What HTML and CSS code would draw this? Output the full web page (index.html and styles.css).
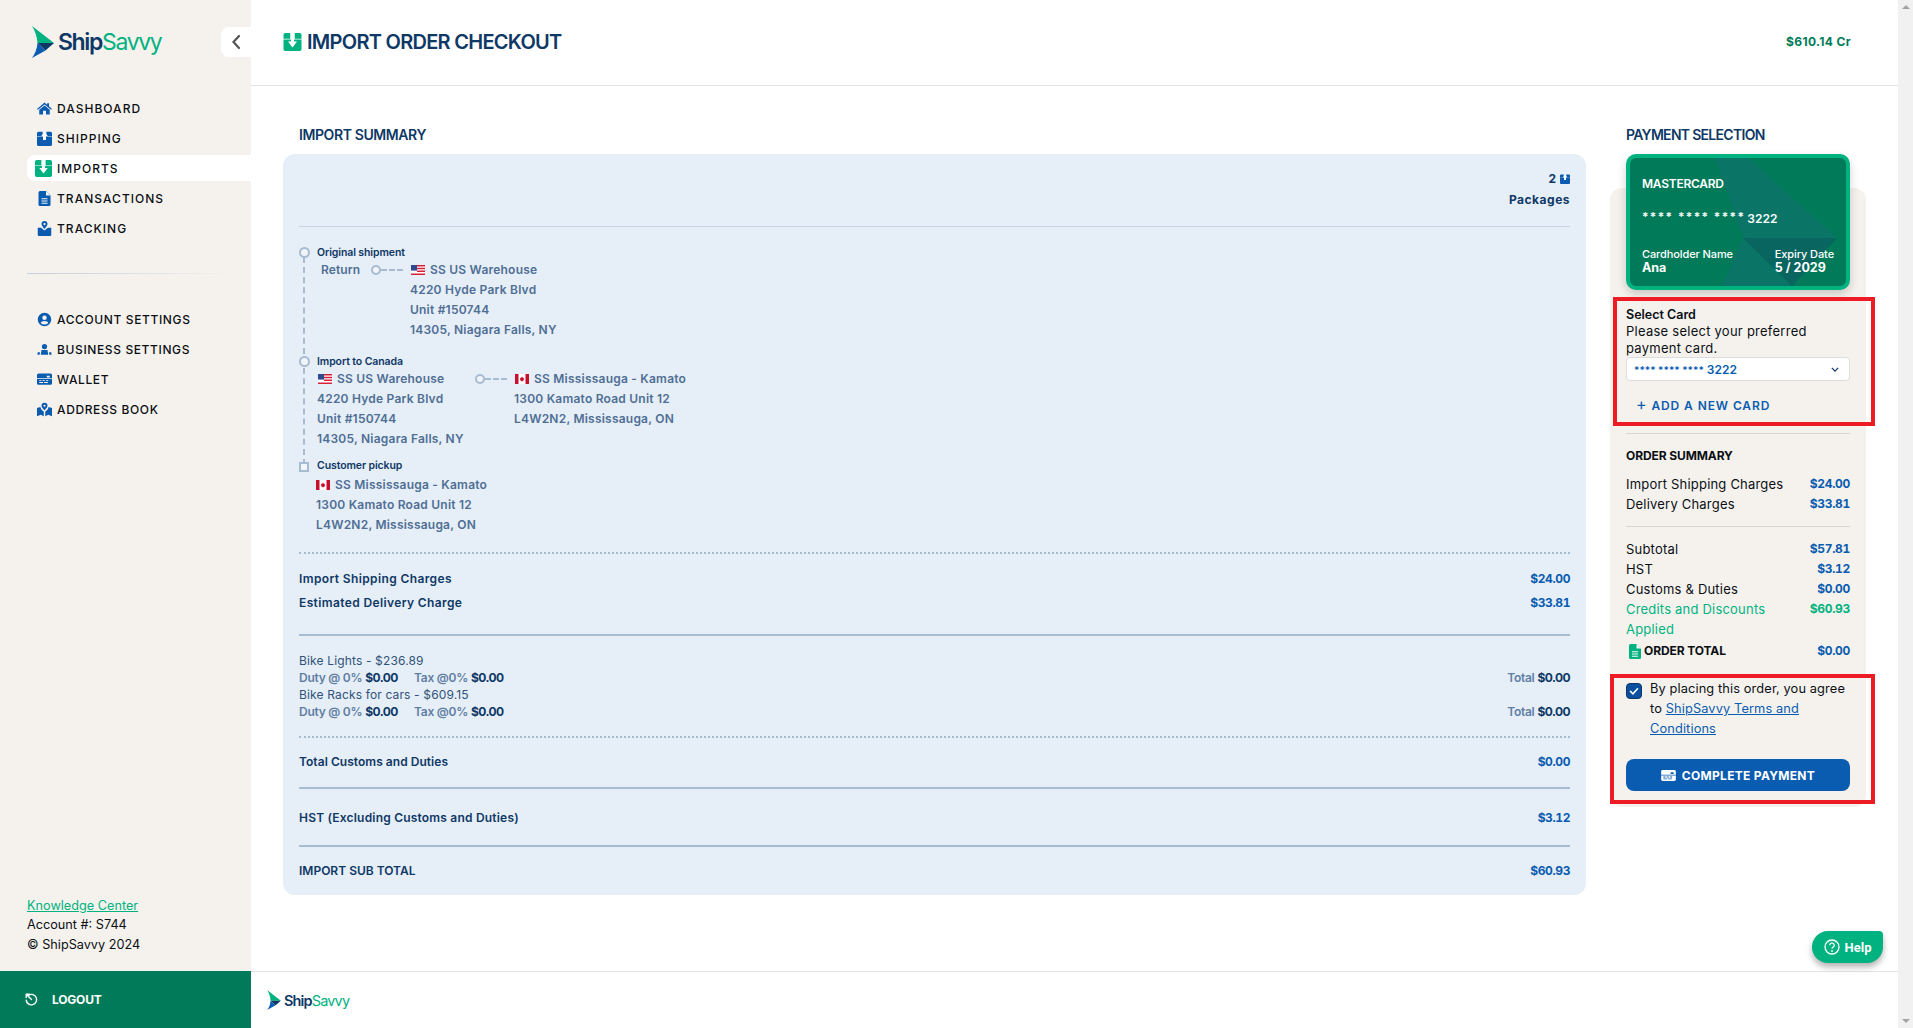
FILE: index.html
```html
<!DOCTYPE html>
<html lang="en">
<head>
<meta charset="utf-8">
<title>Import Order Checkout - ShipSavvy</title>
<link rel="stylesheet" href="styles.css">
</head>
<body>
<svg class="defs" width="0" height="0" aria-hidden="true">
  <symbol id="i-import" viewBox="0 0 20 20"><path fill="#00b27f" d="M2 0h5.500v6.500H0V2a2 2 0 0 1 2-2zM12.500 0H18a2 2 0 0 1 2 2v4.500h-7.500zM0 7.200h20V18a2 2 0 0 1-2 2H2a2 2 0 0 1-2-2z"/><path fill="#fff" d="M8.200 3h3.600v6.500H15L10 16 5 9.500h3.200z"/></symbol>
  <symbol id="i-box" viewBox="0 0 20 20"><path fill="#0a5cb0" d="M2 1h5.500v5.500H0V3a2 2 0 0 1 2-2zM12.500 1H18a2 2 0 0 1 2 2v3.500h-7.500zM0 7.200h20V18a2 2 0 0 1-2 2H2a2 2 0 0 1-2-2z"/><path fill="#fff" d="M10 1.500l4.500 5H12V12H8V6.500H5.500z"/></symbol>
  <symbol id="i-doc" viewBox="0 0 16 20"><path d="M2 0h8l6 6v12a2 2 0 0 1-2 2H2a2 2 0 0 1-2-2V2a2 2 0 0 1 2-2z"/><path fill="#fff" d="M10 0v6h6zM4 9.500h8V11H4zM4 12.500h8V14H4zM4 15.500h8V17H4z" opacity=".95"/></symbol>
  <symbol id="i-flag-us" viewBox="0 0 14 10"><path fill="#fff" d="M0 0h14v10H0z"/><path fill="#d8203a" d="M0 0h14v1.400H0zM6 2.800h8v1.400H6zM6 5.600h8V7H6zM0 8.400h14V10H0z"/><path fill="#2f4a8f" d="M0 0h6v5.600H0z"/></symbol>
  <symbol id="i-flag-ca" viewBox="0 0 14 10"><path fill="#fff" d="M0 0h14v10H0z"/><path fill="#c8102e" d="M0 0h3.500v10H0zM10.500 0H14v10h-3.500zM7 2.500l1 1.500 1-.3-.4 1.800.8.2L7 7.500 4.600 5.700l.8-.2L5 3.700l1 .3z"/></symbol>
  <symbol id="i-card" viewBox="0 0 20 15"><path d="M2 0h16a2 2 0 0 1 2 2v11a2 2 0 0 1-2 2H2a2 2 0 0 1-2-2V2a2 2 0 0 1 2-2z"/><path fill="var(--cut)" d="M13 3h4v2.500h-4zM0 6.500h20V7.500H0zM3 9h3v1.200H3zM7.500 9h3v1.200h-3zM12 9h3v1.200h-3zM3 11.500h5v1.200H3zM9.500 11.500h5v1.200h-5z"/></symbol>
  <symbol id="i-mark" viewBox="0 0 22 32"><path fill="#00b27f" d="M0 0l22 17H5.500C5 10 3 5 0 0z"/><path fill="#0e3866" d="M5.500 17H22l-8.500 7.500z"/><path fill="#0a5cb0" d="M5.500 17l8 7.500L0 32c3-4 5-9 5.500-15z"/></symbol>
</svg>

<div class="app">
  <aside class="sidebar">
    <div class="brand">
      <a class="logo" href="#"><svg class="logo-mark"><use href="#i-mark"/></svg><span class="logo-text">Ship<span class="savvy">Savvy</span></span></a>
      <button class="collapse" type="button" aria-label="Collapse"><svg viewBox="0 0 10 16" class="chev"><path d="M8 2L2.500 8 8 14" fill="none" stroke="#555" stroke-width="2.200" stroke-linecap="round"/></svg></button>
    </div>
    <nav class="nav">
      <a class="nav-item" href="#"><svg class="nav-icon" viewBox="0 0 20 20"><path fill="#0a5cb0" d="M10 2L0 10.500l1.200 1.300L10 4.500l8.800 7.300 1.200-1.300L16 7V3h-2.500v1.900z"/><path fill="#0a5cb0" d="M10 6l-7 5.800V18h5v-5h4v5h5v-6.200z"/></svg>DASHBOARD</a>
      <a class="nav-item" href="#"><svg class="nav-icon"><use href="#i-box"/></svg>SHIPPING</a>
      <a class="nav-item active" href="#"><svg class="nav-icon big"><use href="#i-import"/></svg>IMPORTS</a>
      <a class="nav-item" href="#"><svg class="nav-icon doc"><use href="#i-doc"/></svg>TRANSACTIONS</a>
      <a class="nav-item" href="#"><svg class="nav-icon" viewBox="0 0 20 20"><path fill="#0a5cb0" fill-rule="evenodd" d="M10 0a4 4 0 0 1 4 4c0 2.500-4 6.500-4 6.500S6 6.500 6 4a4 4 0 0 1 4-4zm0 2.500a1.500 1.500 0 1 0 0 3 1.500 1.500 0 0 0 0-3z"/><path fill="#0a5cb0" d="M1 9h4.500l4.500 3.500L14.500 9H19v9.500a1.500 1.500 0 0 1-1.500 1.500h-15A1.500 1.500 0 0 1 1 18.500z"/></svg>TRACKING</a>
    </nav>
    <div class="nav-rule"></div>
    <nav class="nav nav-alt">
      <a class="nav-item" href="#"><svg class="nav-icon" viewBox="0 0 20 20"><path fill="#0a5cb0" fill-rule="evenodd" d="M10 1a9 9 0 1 1 0 18 9 9 0 0 1 0-18zm0 3.500a3 3 0 1 0 0 6 3 3 0 0 0 0-6zm0 7.500c-2.500 0-4.500 1-5 2.500a6.800 6.800 0 0 0 10 0c-.5-1.500-2.500-2.500-5-2.500z"/></svg>ACCOUNT SETTINGS</a>
      <a class="nav-item" href="#"><svg class="nav-icon" viewBox="0 0 20 20"><circle cx="10" cy="6" r="3.500" fill="#0a5cb0"/><path fill="#0a5cb0" d="M6 10.500h8l1 6.500H5zM1 13.500h3L3.500 17H0.500zM16 13.500h3l.5 3.500h-3z"/></svg>BUSINESS SETTINGS</a>
      <a class="nav-item" href="#"><svg class="nav-icon wallet"><use href="#i-card"/></svg>WALLET</a>
      <a class="nav-item" href="#"><svg class="nav-icon" viewBox="0 0 20 20"><path fill="#0a5cb0" fill-rule="evenodd" d="M10 1a4 4 0 0 1 4 4c0 2.500-4 6-4 6S6 7.500 6 5a4 4 0 0 1 4-4zm0 2.600a1.400 1.400 0 1 0 0 2.800 1.400 1.400 0 0 0 0-2.800z"/><path fill="#0a5cb0" d="M0 8l4.500-1.500 1 3L9 13v6l-4-2-5 2zM11 13l3.500-3.500 1-3L20 8v11l-5-2-4 2z"/></svg>ADDRESS BOOK</a>
    </nav>
    <div class="side-foot">
      <a class="kc" href="#">Knowledge Center</a>
      <div>Account #: S744</div>
      <div>© ShipSavvy 2024</div>
    </div>
    <a class="logout" href="#"><svg class="logout-icon" viewBox="0 0 16 16"><path fill="none" stroke="#fff" stroke-width="1.700" stroke-linecap="round" d="M4.500 2.700a6.400 6.400 0 1 1-3 6M1.500 1.500L8 8M1.500 1.500v4M1.500 1.500h4"/></svg>LOGOUT</a>
  </aside>

  <div class="main">
    <header class="topbar">
      <h1 class="title"><svg class="title-icon"><use href="#i-import"/></svg>IMPORT ORDER CHECKOUT</h1>
      <span class="credit">$610.14 Cr</span>
    </header>

    <div class="content">
      <section class="summary">
        <h2 class="sec-title inset">IMPORT SUMMARY</h2>
        <div class="panel">
          <div class="pkgs">
            <div class="pkg-count">2 <svg class="pkg-icon"><use href="#i-box"/></svg></div>
            <div class="pkg-label">Packages</div>
          </div>

          <div class="timeline">
            <span class="rail"></span>
            <div class="leg">
              <span class="node"></span>
              <div class="leg-title">Original shipment</div>
              <div class="route">
                <div class="return">Return</div>
                <div class="conn"><span class="conn-dot"></span><span class="conn-dash"></span></div>
                <div class="stop">
                  <div class="line line-first"><svg class="flag"><use href="#i-flag-us"/></svg>SS US Warehouse</div>
                  <div class="line">4220 Hyde Park Blvd</div>
                  <div class="line">Unit #150744</div>
                  <div class="line">14305, Niagara Falls, NY</div>
                </div>
              </div>
            </div>
            <div class="leg leg-two">
              <span class="node"></span>
              <div class="leg-title">Import to Canada</div>
              <div class="route">
                <div class="stop stop-us">
                  <div class="line line-first"><svg class="flag"><use href="#i-flag-us"/></svg>SS US Warehouse</div>
                  <div class="line">4220 Hyde Park Blvd</div>
                  <div class="line">Unit #150744</div>
                  <div class="line">14305, Niagara Falls, NY</div>
                </div>
                <div class="conn"><span class="conn-dot"></span><span class="conn-dash"></span></div>
                <div class="stop">
                  <div class="line line-first"><svg class="flag"><use href="#i-flag-ca"/></svg>SS Mississauga - Kamato</div>
                  <div class="line">1300 Kamato Road Unit 12</div>
                  <div class="line">L4W2N2, Mississauga, ON</div>
                </div>
              </div>
            </div>
            <div class="leg leg-three">
              <span class="node square"></span>
              <div class="leg-title">Customer pickup</div>
              <div class="stop stop-last">
                <div class="line"><svg class="flag"><use href="#i-flag-ca"/></svg>SS Mississauga - Kamato</div>
                <div class="line">1300 Kamato Road Unit 12</div>
                <div class="line">L4W2N2, Mississauga, ON</div>
              </div>
            </div>
          </div>

          <div class="charges dotted">
            <div class="row"><span>Import Shipping Charges</span><b>$24.00</b></div>
            <div class="row"><span>Estimated Delivery Charge</span><b>$33.81</b></div>
          </div>

          <div class="items solid">
            <div class="item-name">Bike Lights - $236.89</div>
            <div class="item-tax"><span class="tx"><span class="muted">Duty @ 0%</span> <b>$0.00</b></span><span class="tx"><span class="muted">Tax @0%</span> <b>$0.00</b></span><span class="tx-total"><span class="muted">Total</span> <b>$0.00</b></span></div>
            <div class="item-name">Bike Racks for cars - $609.15</div>
            <div class="item-tax"><span class="tx"><span class="muted">Duty @ 0%</span> <b>$0.00</b></span><span class="tx"><span class="muted">Tax @0%</span> <b>$0.00</b></span><span class="tx-total"><span class="muted">Total</span> <b>$0.00</b></span></div>
          </div>

          <div class="block dotted pad-a"><div class="row"><span>Total Customs and Duties</span><b>$0.00</b></div></div>
          <div class="block solid pad-b"><div class="row"><span>HST (Excluding Customs and Duties)</span><b>$3.12</b></div></div>
          <div class="block solid pad-c"><div class="row"><span>IMPORT SUB TOTAL</span><b>$60.93</b></div></div>
        </div>
      </section>

      <section class="payment">
        <h2 class="sec-title">PAYMENT SELECTION</h2>
        <div class="card">
          <svg class="card-art" viewBox="0 0 216 128" preserveAspectRatio="none"><path fill="#0a7566" d="M85 0h33l89 80H113zM113 80l49 48H92z"/><path fill="#09655f" d="M113 80h94l-45 48z"/></svg>
          <div class="card-brand">MASTERCARD</div>
          <div class="card-num"><span class="card-dots">**** **** ****</span> 3222</div>
          <div class="card-foot">
            <div><div class="card-cap">Cardholder Name</div><div class="card-val">Ana</div></div>
            <div><div class="card-cap">Expiry Date</div><div class="card-val">5 / 2029</div></div>
          </div>
        </div>
        <div class="pay-panel">
          <div class="sel-title">Select Card</div>
          <div class="sel-help">Please select your preferred payment card.</div>
          <div class="select"><span><span class="sel-dots">**** **** ****</span> 3222</span><svg class="sel-chev" viewBox="0 0 10 6"><path d="M1 1l4 4 4-4" fill="none" stroke="#0e3866" stroke-width="1.500"/></svg></div>
          <a class="add-card" href="#"><span class="plus">+</span> ADD A NEW CARD</a>
          <div class="order">
            <h3 class="order-title">ORDER SUMMARY</h3>
            <div class="o-row"><span>Import Shipping Charges</span><b>$24.00</b></div>
            <div class="o-row"><span>Delivery Charges</span><b>$33.81</b></div>
            <div class="o-rule"></div>
            <div class="o-row"><span>Subtotal</span><b>$57.81</b></div>
            <div class="o-row"><span>HST</span><b>$3.12</b></div>
            <div class="o-row"><span>Customs &amp; Duties</span><b>$0.00</b></div>
            <div class="o-row credit-row"><span>Credits and Discounts Applied</span><b>$60.93</b></div>
            <div class="o-row total-row"><span class="total-label"><svg class="total-icon"><use href="#i-doc"/></svg>ORDER TOTAL</span><b>$0.00</b></div>
          </div>
          <label class="agree">
            <span class="check"><svg viewBox="0 0 16 16"><path d="M4 8.500l2.800 2.700L12 5.500" fill="none" stroke="#fff" stroke-width="1.800" stroke-linecap="round"/></svg></span>
            <span class="agree-text">By placing this order, you agree to <a href="#">ShipSavvy Terms and Conditions</a></span>
          </label>
          <button class="pay-btn" type="button"><svg class="pay-icon"><use href="#i-card"/></svg>COMPLETE PAYMENT</button>
        </div>
        <div class="mark mark-a"></div>
        <div class="mark mark-b"></div>
      </section>
    </div>

    <footer class="foot">
      <svg class="foot-mark"><use href="#i-mark"/></svg><span class="foot-text">Ship<span class="savvy">Savvy</span></span>
    </footer>

    <button class="help" type="button"><svg class="help-icon" viewBox="0 0 16 16"><circle cx="8" cy="8" r="7" fill="none" stroke="#fff" stroke-width="1.300"/><path d="M5.800 6.200a2.200 2.200 0 1 1 3.400 1.800c-.8.500-1.200 1-1.200 1.800" fill="none" stroke="#fff" stroke-width="1.300"/><circle cx="8" cy="12" r=".9" fill="#fff"/></svg>Help</button>
  </div>

  <div class="scrollbar"><span class="arrow up"></span><span class="arrow down"></span></div>
</div>
</body>
</html>
```

FILE: styles.css
```css
* { box-sizing: border-box; }
html, body { margin: 0; height: 100%; overflow: hidden; }
body { font-family: Inter, "Liberation Sans", sans-serif; font-size: 12px; color: #0b0f14; background: #fff; }
a { color: inherit; text-decoration: none; }
h1, h2, h3 { margin: 0; }
button { font-family: inherit; border: 0; cursor: pointer; }
.defs { position: absolute; }

.app { display: flex; height: 1028px; width: 1913px; }

/* sidebar */
.sidebar { width: 251px; flex: none; background: #f5f2ee; display: flex; flex-direction: column; }
.brand { height: 93px; padding-top: 26px; display: flex; justify-content: space-between; align-items: flex-start; padding-left: 32px; flex: none; }
.logo { display: flex; align-items: center; height: 32px; }
.logo-mark { width: 22px; height: 32px; }
.logo-text { font-size: 23px; font-weight: 600; color: #0e3866; margin-left: 4px; letter-spacing: -1.35px; }
.savvy { color: #00b27f; font-weight: 400; }
.collapse { width: 30px; height: 30px; margin-top: 1px; background: #fff; border-radius: 8px 0 0 8px; padding: 0; display: flex; align-items: center; justify-content: center; }
.chev { width: 10px; height: 16px; }

.nav { display: flex; flex-direction: column; padding-left: 27px; }
.nav-item { height: 30px; display: flex; align-items: center; gap: 5px; padding-left: 10px; letter-spacing: 1.02px; font-size: 12px; font-weight: 500; color: #0b0f14; }
.nav-alt .nav-item { letter-spacing: .62px; }
.nav-item.active { height: 26px; margin: 2px 0; background: #fff; border-radius: 8px 0 0 8px; padding-left: 8px; gap: 5px; }
.nav-icon { width: 15px; height: 15px; flex: none; }
.nav-icon.big { width: 17px; height: 17px; }
.nav-icon.doc { fill: #0a5cb0; }
.nav-icon.wallet { fill: #0a5cb0; --cut: #f5f2ee; height: 12px; }
.nav-rule { height: 1px; margin: 30px 11px 30px 27px; background: linear-gradient(90deg, #c3cfdc, #f5f2ee); }

.side-foot { margin-top: auto; padding: 0 0 17px 27px; line-height: 19.500px; font-size: 12.700px; }
.kc { color: #00b27f; text-decoration: underline; display: block; }
.logout { height: 57px; flex: none; background: #007a58; color: #fff; display: flex; align-items: center; padding-left: 25px; gap: 14px; font-weight: 700; font-size: 12px; letter-spacing: -.2px; }
.logout-icon { width: 13px; height: 13px; }

/* main */
.main { flex: 1; min-width: 0; display: flex; flex-direction: column; position: relative; }
.topbar { height: 86px; flex: none; border-bottom: 1px solid #e3e3e3; display: flex; justify-content: space-between; align-items: center; padding: 0 47px 2px 32px; }
.title { display: flex; align-items: center; gap: 5px; font-size: 20px; font-weight: 600; color: #0e3866; letter-spacing: -.72px; }
.title-icon { width: 19px; height: 18px; }
.credit { color: #007a58; font-weight: 700; font-size: 12px; letter-spacing: .35px; }

.content { flex: 1; display: flex; gap: 24px; padding: 39px 32px 0; min-height: 0; }
.summary { width: 1303px; flex: none; }
.sec-title { font-size: 14px; line-height: 20px; font-weight: 600; color: #0e3866; margin-bottom: 9px; letter-spacing: -.4px; }
.payment .sec-title { letter-spacing: -.7px; }
.sec-title.inset { padding-left: 16px; }
.panel { background: #e6eef7; border-radius: 12px; padding: 0 16px; height: 741px; color: #0e3866; }

.pkgs { padding: 15px 0 16px; border-bottom: 1px solid #c4d4e6; text-align: right; font-weight: 700; height: 73px; }
.pkg-count { line-height: 20px; display: flex; justify-content: flex-end; align-items: center; gap: 4px; margin-bottom: 1px; }
.pkg-icon { width: 10px; height: 10px; }
.pkg-label { line-height: 20px; letter-spacing: .5px; }

.timeline { position: relative; padding: 19px 0 0 18px; height: 325px; }
.rail { position: absolute; left: 3.500px; top: 30px; height: 208px; border-left: 2px dashed #a7bbd1; }
.leg { position: relative; }
.leg-two { margin-top: 15px; }
.leg-three { margin-top: 10px; }
.node { position: absolute; left: -18.500px; top: 1px; width: 11px; height: 11px; border: 2.500px solid #a7bbd1; border-radius: 50%; background: #f1f5fa; }
.node.square { border-radius: 0; top: 3px; width: 10px; height: 10px; left: -18px; border-width: 2px; }
.leg-title { line-height: 14px; font-size: 10.500px; font-weight: 600; color: #0e3866; letter-spacing: -.1px; }
.route { display: flex; align-items: flex-start; }
.return { width: 50px; margin-left: 4px; line-height: 20px; font-weight: 600; color: #4f6f95; letter-spacing: .1px; }
.stop { font-weight: 600; color: #4f6f95; letter-spacing: .22px; }
.stop-us { width: 158px; }
.stop-last { margin-left: -1px; }
.leg-three .leg-title { margin-bottom: 2px; }
.line { line-height: 20px; white-space: nowrap; display: flex; align-items: center; }
.line-first { padding-left: 1px; }
.flag { width: 14px; height: 10px; margin-right: 5px; flex: none; }
.conn { width: 32px; margin-right: 7px; height: 20px; display: flex; align-items: center; flex: none; }
.conn-dot { width: 10px; height: 10px; border: 2px solid #a7bbd1; border-radius: 50%; background: #f1f5fa; flex: none; }
.conn-dash { flex: 1; border-top: 2px dashed #a7bbd1; }

.dotted { border-top: 2px dotted #a7bbd1; }
.solid { border-top: 2px solid #a7bbd1; }
.row { display: flex; justify-content: space-between; line-height: 20px; font-weight: 600; color: #0e3866; }
.row b { color: #0a5cb0; font-weight: 700; letter-spacing: -.4px; font-variant-numeric: tabular-nums; }
.charges .row span { letter-spacing: .38px; }
.pad-a .row span { letter-spacing: .04px; }
.pad-b .row span { letter-spacing: .2px; }
.charges { padding: 15px 0 21px; display: flex; flex-direction: column; gap: 4px; height: 82px; }
.items { padding: 15.500px 0 16px; height: 102px; line-height: 17px; }
.item-name { color: #2f5379; letter-spacing: .15px; }
.item-tax { display: flex; font-weight: 600; }
.item-tax b { color: #0e3866; font-weight: 700; letter-spacing: -.6px; }
.muted { color: #5f7ea3; letter-spacing: -.25px; }
.tx { width: 115px; }
.tx + .tx { width: auto; }
.tx-total { margin-left: auto; }
.block { display: block; }
.pad-a { padding-top: 14px; height: 51px; }
.pad-b { padding-top: 19px; height: 58px; }
.pad-c { padding-top: 14px; }

/* payment */
.payment { width: 256px; flex: none; position: relative; }
.payment .sec-title { padding-left: 16px; }
.card { position: relative; z-index: 1; margin: 0 16px; height: 136px; background: #007a58; border: 4px solid #00b27f; border-radius: 10px; box-shadow: 0 4px 10px rgba(0,0,0,.18); color: #fff; padding: 18px 12px 0; overflow: hidden; }
.card-art { position: absolute; inset: 0; width: 100%; height: 100%; }
.card-brand, .card-num, .card-foot { position: relative; }
.card-brand { font-weight: 600; font-size: 12px; line-height: 16px; letter-spacing: -.25px; }
.card-num { margin-top: 18px; font-weight: 600; line-height: 18px; display: flex; gap: 2px; align-items: center; }
.card-dots { letter-spacing: 1.400px; font-size: 12px; position: relative; top: -2px; }
.card-foot { display: flex; justify-content: space-between; margin-top: 19px; width: 192px; }
.card-cap { font-size: 11px; line-height: 14px; letter-spacing: -.1px; font-weight: 500; }
.card-val { line-height: 14px; font-weight: 700; font-size: 12.500px; }

.pay-panel { margin-top: -102px; background: #f5f2ee; border-radius: 12px; padding: 118px 16px 16px; height: 619px; }
.sel-title { font-weight: 600; line-height: 17px; font-size: 12.500px; }
.sel-help { line-height: 17px; font-size: 13px; letter-spacing: .25px; }
.select { height: 24px; border: 1px solid #ddd; border-radius: 4px; background: #fff; display: flex; justify-content: space-between; align-items: center; padding: 0 10px 0 7px; color: #0a5cb0; font-weight: 600; }
.sel-dots { font-size: 10px; letter-spacing: 0; }
.sel-chev { width: 8px; height: 5px; }
.add-card { display: block; margin: 13px 0 0 10px; line-height: 20px; color: #0a5cb0; font-weight: 600; letter-spacing: .9px; height: 39px; }
.plus { font-weight: 400; font-size: 16px; }
.order { border-top: 1px solid #d9d6d1; padding-top: 12px; }
.order-title { font-size: 12px; line-height: 20px; font-weight: 700; margin-bottom: 8px; letter-spacing: -.1px; }
.o-row { display: flex; justify-content: space-between; align-items: flex-start; line-height: 20px; gap: 20px; font-size: 13px; letter-spacing: .2px; }
.o-row b { color: #0a5cb0; font-weight: 700; white-space: nowrap; font-size: 12px; letter-spacing: -.3px; font-variant-numeric: tabular-nums; }
.o-rule { border-top: 1px solid #d9d6d1; margin: 12px 0 12px; }
.credit-row, .credit-row b { color: #00b27f; }
.credit-row span { width: 150px; }
.total-row { margin-top: 2px; }
.total-label { display: flex; align-items: center; gap: 3px; font-weight: 700; letter-spacing: -.1px; font-size: 12px; }
.total-icon { width: 12px; height: 15px; fill: #00b27f; margin-left: 3px; }
.agree { display: flex; gap: 8px; margin-top: 18px; line-height: 20px; height: 80px; font-size: 12.800px; letter-spacing: .12px; }
.agree-text { width: 200px; flex: none; }
.agree a { color: #0a5cb0; text-decoration: underline; }
.check { width: 16px; height: 16px; background: #0a4fa0; border: 1px solid #0e3866; border-radius: 4px; flex: none; margin-top: 4px; display: flex; }
.check svg { width: 14px; height: 14px; }
.pay-btn { width: 224px; height: 32px; background: #0a5cb0; border-radius: 8px; color: #fff; font-weight: 700; font-size: 12px; letter-spacing: .3px; display: flex; align-items: center; justify-content: center; gap: 6px; }
.pay-icon { width: 15px; height: 11px; fill: #fff; --cut: #0a5cb0; }

.mark { position: absolute; border: 4px solid #ed1c24; pointer-events: none; z-index: 2; }
.mark-a { left: 3px; top: 172px; width: 262px; height: 129px; }
.mark-b { left: 0; top: 549px; width: 265px; height: 130px; }

/* footer */
.foot { height: 57px; flex: none; border-top: 1px solid #e3e3e3; display: flex; align-items: center; padding-left: 16px; }
.foot-mark { width: 14px; height: 20px; }
.foot-text { font-size: 14.500px; font-weight: 600; color: #0e3866; margin-left: 3px; letter-spacing: -.85px; }

.help { position: absolute; left: 1561px; top: 931px; width: 71px; height: 32px; background: #00b27f; border-radius: 16px 4px 16px 16px; color: #fff; font-weight: 700; font-size: 13px; display: flex; align-items: center; justify-content: center; gap: 5px; padding: 0; box-shadow: 0 4px 6px rgba(0,0,0,.3); font-family: Roboto, sans-serif; }
.help-icon { width: 16px; height: 16px; }

.scrollbar { width: 15px; flex: none; background: #f1f1f1; position: relative; }
.arrow { position: absolute; left: 4px; border-left: 4px solid transparent; border-right: 4px solid transparent; }
.arrow.up { top: 5px; border-bottom: 4px solid #a3a3a3; }
.arrow.down { bottom: 5px; border-top: 4px solid #a3a3a3; }
```
